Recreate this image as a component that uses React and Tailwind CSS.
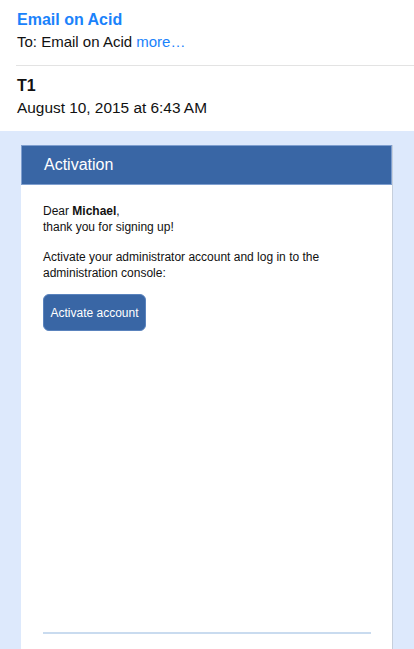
export default function App() {
  return (
    <div className="w-[414px] h-[649px] overflow-hidden bg-white font-['Liberation_Sans',Arial,sans-serif] flex flex-col">
      <div className="pl-[17px] pt-[10px]">
        <div className="text-[16px] leading-[19px] font-bold text-[#1a82fb]">Email on Acid</div>
        <div className="text-[15px] leading-[18px] mt-[4px] text-[#111]">
          To: Email on Acid <span className="text-[#1a82fb]">more…</span>
        </div>
      </div>
      <div className="ml-[16px] mt-[14px] h-px bg-[#e3e3e3]"></div>
      <div className="pl-[17px] pt-[10px] pb-[14px]">
        <div className="text-[16px] leading-[19px] font-bold text-[#111]">T1</div>
        <div className="text-[15.4px] leading-[19px] mt-[3px] text-[#111]">August 10, 2015 at 6:43 AM</div>
      </div>
      <div className="flex-1 bg-[#dde9fc] pt-[14px] pl-[21px] pr-[21px]">
        <div className="h-full bg-white border-r border-[#c6cfdc] flex flex-col">
          <div className="h-[40px] bg-[#3966a5] border border-[#7f9fcf] flex items-center pl-[22px] text-white text-[16px]">
            Activation
          </div>
          <div className="flex-1 pl-[22px] pr-[22px] pt-[18px] text-[12px] leading-[16px] text-[#111] flex flex-col">
            <p>
              Dear <b>Michael</b>,<br />
              thank you for signing up!
            </p>
            <p className="mt-[14px]">
              Activate your administrator account and log in to the administration console:
            </p>
            <div className="mt-[13px]">
              <button className="w-[103px] h-[37px] rounded-[6px] bg-[#3966a5] border border-[#5a83bd] text-white text-[12px]">
                Activate account
              </button>
            </div>
            <div className="mt-auto mb-[15px] h-[2px] bg-[#c9dbef] w-[328px]"></div>
          </div>
        </div>
      </div>
    </div>
  );
}
